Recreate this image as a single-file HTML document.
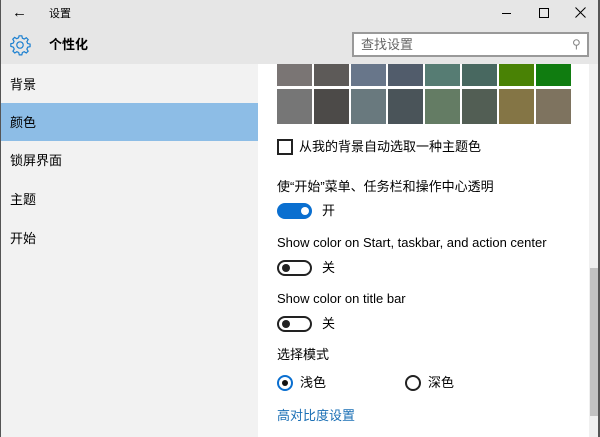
<!DOCTYPE html><html><head><meta charset="utf-8"><style>
*{margin:0;padding:0;box-sizing:border-box}
body{width:600px;height:437px;overflow:hidden;position:relative;background:#fff;font-family:"Liberation Sans","Noto Sans CJK SC",sans-serif;color:#000}
.a{position:absolute}
.t{font-size:13px;white-space:nowrap;line-height:16px}
.sw{position:absolute;width:35px}
.tog{position:absolute;width:35px;height:16px;border-radius:8px}
</style></head><body>
<div class="a" style="left:0;top:0;width:600px;height:64px;background:#e6e6e6"></div>
<div class="a t" style="left:12px;top:5px;font-size:15px">←</div>
<div class="a t" style="left:49px;top:6px;font-size:11px">设置</div>
<div class="a" style="left:502px;top:13px;width:9px;height:1px;background:#000"></div>
<div class="a" style="left:539px;top:8px;width:10px;height:10px;border:1px solid #000"></div>
<svg class="a" style="left:575px;top:7px" width="11" height="11" viewBox="0 0 11 11"><path d="M.5 .5L10.5 10.5M10.5 .5L.5 10.5" stroke="#000" stroke-width="1"/></svg>
<svg class="a" style="left:9px;top:34px" width="22" height="22" viewBox="0 0 24 24"><path d="M12 2l2 0 .6 2.6 2 .9 2.3-1.4 2 2-1.4 2.3.9 2 2.6.6v2.8l-2.6.6-.9 2 1.4 2.3-2 2-2.3-1.4-2 .9-.6 2.6h-2.8l-.6-2.6-2-.9-2.3 1.4-2-2 1.4-2.3-.9-2L2 13.4v-2.8l2.6-.6.9-2-1.4-2.3 2-2 2.3 1.4 2-.9L11 2z" fill="none" stroke="#1a7fd0" stroke-width="1.3"/><circle cx="12" cy="12" r="3.5" fill="none" stroke="#1a7fd0" stroke-width="1.3"/></svg>
<div class="a t" style="left:49px;top:37px;font-weight:bold">个性化</div>
<div class="a" style="left:352px;top:32px;width:237px;height:25px;border:2px solid #999;background:#fff"></div>
<div class="a t" style="left:361px;top:37px;color:#666">查找设置</div>
<div class="a t" style="left:572px;top:36px;color:#888;font-size:12px">⚲</div>
<div class="a" style="left:0;top:64px;width:258px;height:373px;background:#f2f2f2"></div>
<div class="a" style="left:0;top:103px;width:258px;height:38px;background:#8dbde6"></div>
<div class="a t" style="left:10px;top:77px">背景</div>
<div class="a t" style="left:10px;top:115px">颜色</div>
<div class="a t" style="left:10px;top:153px">锁屏界面</div>
<div class="a t" style="left:10px;top:192px">主题</div>
<div class="a t" style="left:10px;top:231px">开始</div>
<div class="sw" style="left:277px;top:64px;height:22px;background:#7a7574"></div>
<div class="sw" style="left:314px;top:64px;height:22px;background:#5d5a58"></div>
<div class="sw" style="left:351px;top:64px;height:22px;background:#68768a"></div>
<div class="sw" style="left:388px;top:64px;height:22px;background:#515c6b"></div>
<div class="sw" style="left:425px;top:64px;height:22px;background:#567c73"></div>
<div class="sw" style="left:462px;top:64px;height:22px;background:#486860"></div>
<div class="sw" style="left:499px;top:64px;height:22px;background:#498205"></div>
<div class="sw" style="left:536px;top:64px;height:22px;background:#107c10"></div>
<div class="sw" style="left:277px;top:89px;height:35px;background:#767676"></div>
<div class="sw" style="left:314px;top:89px;height:35px;background:#4c4a48"></div>
<div class="sw" style="left:351px;top:89px;height:35px;background:#69797e"></div>
<div class="sw" style="left:388px;top:89px;height:35px;background:#4a5459"></div>
<div class="sw" style="left:425px;top:89px;height:35px;background:#647c64"></div>
<div class="sw" style="left:462px;top:89px;height:35px;background:#525e54"></div>
<div class="sw" style="left:499px;top:89px;height:35px;background:#847545"></div>
<div class="sw" style="left:536px;top:89px;height:35px;background:#7e735f"></div>
<div class="a" style="left:277px;top:139px;width:16px;height:16px;border:2px solid #222"></div>
<div class="a t" style="left:299px;top:139px">从我的背景自动选取一种主题色</div>
<div class="a t" style="left:277px;top:179px">使“开始”菜单、任务栏和操作中心透明</div>
<div class="tog" style="left:277px;top:203px;background:#0a6fd0"></div>
<div class="a" style="left:301px;top:207px;width:8px;height:8px;border-radius:50%;background:#fff"></div>
<div class="a t" style="left:322px;top:203px">开</div>
<div class="a t" style="left:277px;top:235px">Show color on Start, taskbar, and action center</div>
<div class="tog" style="left:277px;top:260px;border:2px solid #222"></div>
<div class="a" style="left:282px;top:264px;width:8px;height:8px;border-radius:50%;background:#222"></div>
<div class="a t" style="left:322px;top:260px">关</div>
<div class="a t" style="left:277px;top:291px">Show color on title bar</div>
<div class="tog" style="left:277px;top:316px;border:2px solid #222"></div>
<div class="a" style="left:282px;top:320px;width:8px;height:8px;border-radius:50%;background:#222"></div>
<div class="a t" style="left:322px;top:316px">关</div>
<div class="a t" style="left:277px;top:347px">选择模式</div>
<div class="a" style="left:277px;top:375px;width:16px;height:16px;border-radius:50%;border:2px solid #0a6fd0"></div>
<div class="a" style="left:282px;top:380px;width:6px;height:6px;border-radius:50%;background:#111"></div>
<div class="a t" style="left:300px;top:375px">浅色</div>
<div class="a" style="left:405px;top:375px;width:16px;height:16px;border-radius:50%;border:2px solid #222"></div>
<div class="a t" style="left:428px;top:375px">深色</div>
<div class="a t" style="left:277px;top:408px;color:#1a6fb5">高对比度设置</div>
<div class="a" style="left:589px;top:64px;width:9px;height:373px;background:#f0f0f0"></div>
<div class="a" style="left:590px;top:268px;width:8px;height:148px;background:#c2c2c2"></div>
<div class="a" style="left:598px;top:0;width:2px;height:437px;background:#555"></div>
<div class="a" style="left:0;top:0;width:1px;height:437px;background:#555"></div>
</body></html>
